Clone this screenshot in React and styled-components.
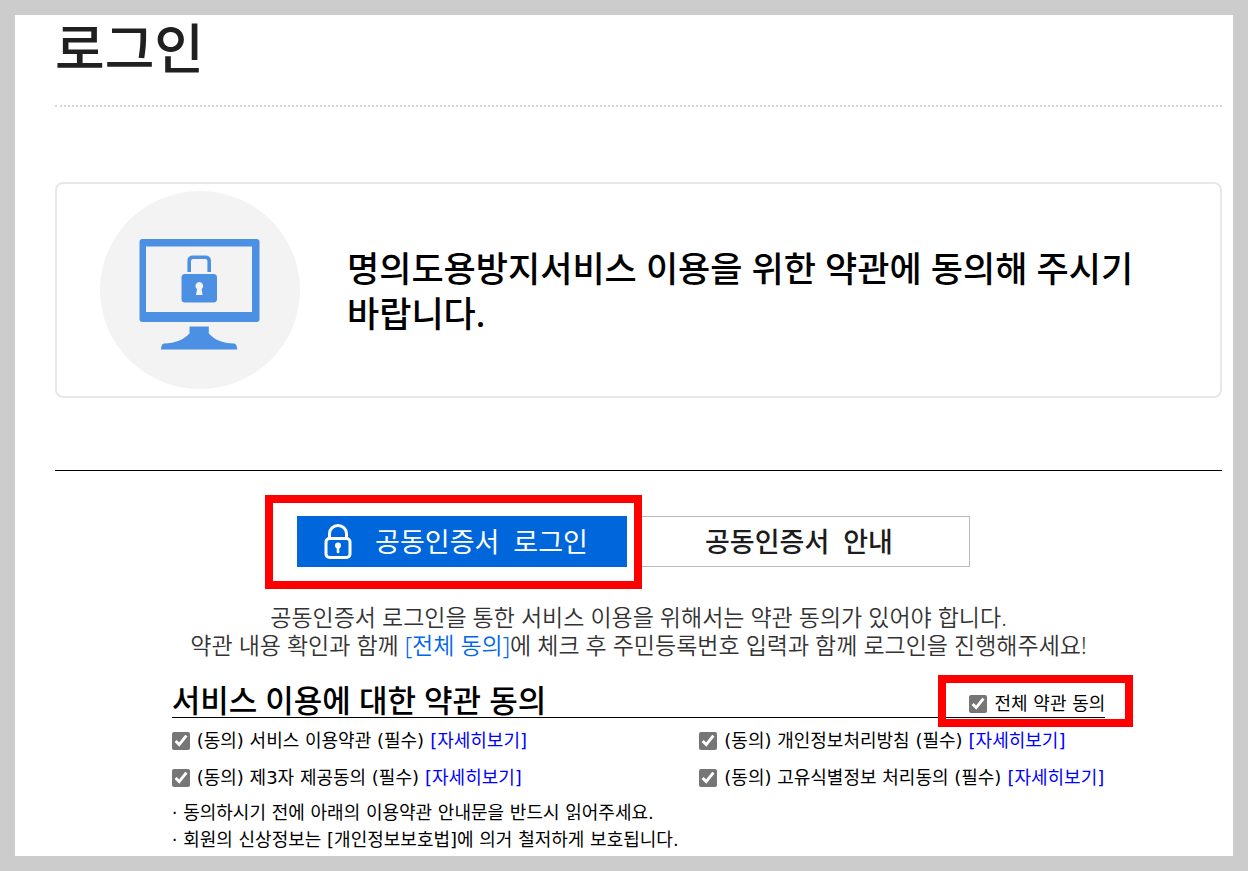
import React, { useState } from "react";
import styled, { createGlobalStyle } from "styled-components";

const GlobalStyle = createGlobalStyle`
  * { box-sizing: border-box; }
  body {
    margin: 0;
    background: #ccc;
    color: #000;
    font-family: "Noto Sans", "Noto Sans CJK KR", sans-serif;
  }
`;

const Page = styled.div`
  padding: 15px;
`;

const Panel = styled.main`
  padding: 0 11px 3px 40px;
  background: #fff;
`;

const PageHeader = styled.header`
  padding: 4px 0 28px;
  border-bottom: 2px dotted #d6d6d6;
`;

const PageTitle = styled.h1`
  margin: 0;
  color: #202020;
  font-size: 54px;
  font-weight: 500;
  line-height: 58px;
`;

const Notice = styled.section`
  display: flex;
  align-items: center;
  gap: 47px;
  margin-top: 75px;
  padding: 7px 43px;
  border: 2px solid #e8e8e8;
  border-radius: 8px;
`;

const NoticeText = styled.h2`
  flex: 1;
  margin: 0;
  padding-top: 2px;
  font-size: 35px;
  font-weight: 500;
  line-height: 45px;
  word-break: keep-all;
`;

const NoticeIcon = styled.svg`
  flex: none;
  display: block;
  width: 200px;
  height: 198px;
`;

const Login = styled.section`
  margin-top: 72px;
  border-top: 1px solid #000;
`;

const Actions = styled.div`
  display: flex;
  justify-content: center;
  gap: 13px;
  padding: 45px 10px 0 0;
`;

const Highlight = styled.div`
  position: relative;
  align-self: flex-end;
  &::after {
    content: "";
    position: absolute;
    inset: ${(p) => p.$inset};
    border: 8px solid #f00;
    pointer-events: none;
  }
`;

const ActionButton = styled.button`
  display: flex;
  align-items: center;
  justify-content: center;
  gap: 23px;
  width: 330px;
  height: 51px;
  padding: 0 12px 0 0;
  border: ${(p) => (p.$primary ? "0" : "1px solid #bbb")};
  background: ${(p) => (p.$primary ? "#0066dc" : "#fff")};
  color: ${(p) => (p.$primary ? "#fff" : "#1c1c1c")};
  font-family: inherit;
  font-size: 27px;
  font-weight: ${(p) => (p.$primary ? 400 : 500)};
  line-height: 40px;
  white-space: pre;
`;

const Guide = styled.p`
  margin: 36px 0 0;
  color: #333;
  font-size: 23px;
  font-weight: 350;
  line-height: 28px;
  text-align: center;
`;

const Emphasis = styled.span`
  color: #0066ee;
`;

const Terms = styled.section`
  width: 80%;
  margin: 20px auto 0;
  font-family: "DejaVu Sans", "Noto Sans CJK KR", sans-serif;
  font-size: 18px;
  font-weight: 400;
  line-height: 27px;
`;

const TermsHeader = styled.div`
  display: flex;
  align-items: center;
  justify-content: space-between;
  border-bottom: 1px solid #000;
`;

const TermsTitle = styled.h3`
  margin: 0;
  padding-top: 4px;
  font-family: "Noto Sans", "Noto Sans CJK KR", sans-serif;
  font-size: 31px;
  font-weight: 500;
  line-height: 34px;
`;

const TermsGrid = styled.div`
  display: grid;
  grid-template-columns: 1fr 406px;
  padding: 4px 0 3px;
`;

const TermRow = styled.div`
  display: flex;
  align-items: center;
  gap: 6px;
  height: 37px;
  white-space: nowrap;
`;

const CheckLabel = styled.label`
  display: flex;
  align-items: center;
  gap: 7px;
`;

const Check = styled.input`
  width: 18px;
  height: 18px;
  margin: 0;
  accent-color: #767676;
`;

const DetailLink = styled.a`
  color: #00f;
  text-decoration: none;
`;

const Note = styled.p`
  margin: 0;
`;

const TERMS = [
  "(동의) 서비스 이용약관 (필수)",
  "(동의) 개인정보처리방침 (필수)",
  "(동의) 제3자 제공동의 (필수)",
  "(동의) 고유식별정보 처리동의 (필수)",
];

function MonitorIcon() {
  return (
    <NoticeIcon viewBox="0 0 200 198" aria-hidden="true">
      <ellipse cx="100" cy="99" rx="100" ry="99" fill="#f3f3f3" />
      <path
        fill="#4c90e4"
        fillRule="evenodd"
        d="M42 48H156.500Q159.500 48 159.500 51V128Q159.500 131 156.500 131H42.500Q39.500 131 39.500 128V51Q39.500 48 42.500 48ZM46 55.500V121H152V55.500Z"
      />
      <path
        fill="none"
        stroke="#4c90e4"
        strokeWidth="3.600"
        d="M89.200 81V70Q89.200 66.300 93 66.300H105.300Q109.200 66.300 109.200 70V81"
      />
      <rect x="81.500" y="83" width="35.500" height="28.500" rx="3.500" fill="#4c90e4" />
      <path fill="#f3f3f3" d="M99.300 91a4 4 0 0 1 2.300 7.200L102.600 104H96L97 98.200A4 4 0 0 1 99.300 91Z" />
      <path
        fill="#4c90e4"
        d="M89.500 135.500H108.800V142.500C115 149 122 152 134 152.500Q137 153 137.200 158.500H61Q61.200 153 64 152.500C76 152 83 149 89.500 142.500Z"
      />
    </NoticeIcon>
  );
}

function LockIcon() {
  return (
    <svg width="28" height="36" viewBox="0 0 28 36" fill="none" aria-hidden="true">
      <path d="M5.500 14V9.500a8.500 8 0 0 1 17 0V14" stroke="#fff" strokeWidth="3" />
      <rect x="2" y="14.500" width="24" height="19" rx="3.500" stroke="#fff" strokeWidth="3" />
      <circle cx="14" cy="21.500" r="3" fill="#fff" />
      <path d="M14 22V28" stroke="#fff" strokeWidth="2.600" strokeLinecap="round" />
    </svg>
  );
}

export default function App() {
  const [checked, setChecked] = useState(TERMS.map(() => true));
  const all = checked.every(Boolean);

  return (
    <>
      <GlobalStyle />
      <Page>
        <Panel>
          <PageHeader>
            <PageTitle>로그인</PageTitle>
          </PageHeader>
          <Notice>
            <MonitorIcon />
            <NoticeText>명의도용방지서비스 이용을 위한 약관에 동의해 주시기 바랍니다.</NoticeText>
          </Notice>
          <Login>
            <Actions>
              <Highlight $inset="-21px -15px -22px -32px">
                <ActionButton type="button" $primary>
                  <LockIcon />
                  {"공동인증서  로그인"}
                </ActionButton>
              </Highlight>
              <ActionButton type="button">{"공동인증서  안내"}</ActionButton>
            </Actions>
            <Guide>
              공동인증서 로그인을 통한 서비스 이용을 위해서는 약관 동의가 있어야 합니다.
              <br />
              약관 내용 확인과 함께 <Emphasis>[전체 동의]</Emphasis>에 체크 후 주민등록번호 입력과 함께 로그인을 진행해주세요!
            </Guide>
            <Terms>
              <TermsHeader>
                <TermsTitle>서비스 이용에 대한 약관 동의</TermsTitle>
                <Highlight $inset="-15px -28px -10px -31px">
                  <CheckLabel>
                    <Check
                      type="checkbox"
                      checked={all}
                      onChange={() => setChecked(TERMS.map(() => !all))}
                    />
                    전체 약관 동의
                  </CheckLabel>
                </Highlight>
              </TermsHeader>
              <TermsGrid>
                {TERMS.map((term, i) => (
                  <TermRow key={term}>
                    <CheckLabel>
                      <Check
                        type="checkbox"
                        checked={checked[i]}
                        onChange={() => setChecked(checked.map((c, n) => (n === i ? !c : c)))}
                      />
                      {term}
                    </CheckLabel>
                    <DetailLink href="#terms">[자세히보기]</DetailLink>
                  </TermRow>
                ))}
              </TermsGrid>
              <div id="terms">
                <Note>· 동의하시기 전에 아래의 이용약관 안내문을 반드시 읽어주세요.</Note>
                <Note>· 회원의 신상정보는 [개인정보보호법]에 의거 철저하게 보호됩니다.</Note>
              </div>
            </Terms>
          </Login>
        </Panel>
      </Page>
    </>
  );
}
